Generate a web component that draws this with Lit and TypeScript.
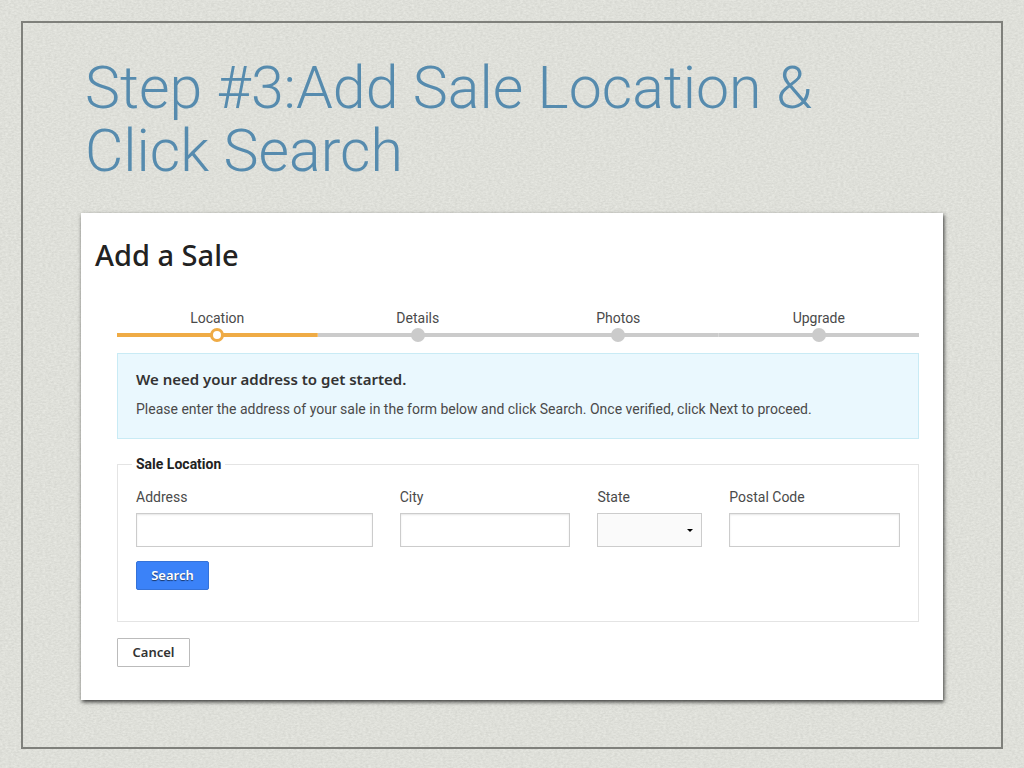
import { LitElement, html, css } from "lit";
import { customElement, property } from "lit/decorators.js";
import { classMap } from "lit/directives/class-map.js";

@customElement("progress-steps")
export class ProgressSteps extends LitElement {
  @property({ attribute: false }) steps: string[] = [];
  @property({ type: Number }) current = 0;

  static styles = css`
    :host {
      display: block;
    }
    .steps {
      display: grid;
      grid-auto-flow: column;
      grid-auto-columns: 1fr;
      margin: 0;
      padding: 0;
      list-style: none;
    }
    .step {
      display: flex;
      flex-direction: column;
      align-items: center;
      font-size: 14px;
      line-height: 20px;
      font-weight: 400;
      color: #4a4a4a;
    }
    .track {
      display: grid;
      place-items: center;
      width: 100%;
      height: 14px;
      background: linear-gradient(#cbcbcb, #cbcbcb) center / 100% 4px no-repeat;
    }
    .dot {
      box-sizing: border-box;
      width: 14px;
      height: 14px;
      border-radius: 50%;
      background: #cbcbcb;
    }
    .active .track {
      background-image: linear-gradient(#efab45, #efab45);
    }
    .active .dot {
      border: 3px solid #efab45;
      background: #fff;
    }
  `;

  render() {
    return html`<ol class="steps">
      ${this.steps.map(
        (name, i) => html`<li class=${classMap({ step: true, active: i === this.current })}>
          <span>${name}</span>
          <span class="track"><span class="dot"></span></span>
        </li>`
      )}
    </ol>`;
  }
}

@customElement("app-root")
export class AppRoot extends LitElement {
  static styles = css`
    :host {
      display: flex;
      box-sizing: border-box;
      min-height: 100vh;
      padding: 21px 21px 19px;
      font-family: Roboto, "Liberation Sans", sans-serif;
      background-color: #dfe0da;
      background-image: url("data:image/svg+xml,%3Csvg xmlns='http://www.w3.org/2000/svg' width='512' height='512'%3E%3Cfilter id='p' x='0' y='0' width='100%25' height='100%25' color-interpolation-filters='sRGB'%3E%3CfeTurbulence type='fractalNoise' baseFrequency='0.35 0.6' numOctaves='3' seed='4' stitchTiles='stitch'/%3E%3CfeColorMatrix values='0.1 0 0 0 0.822 0.1 0 0 0 0.826 0.1 0 0 0 0.802 0 0 0 0 1'/%3E%3C/filter%3E%3Crect width='512' height='512' filter='url(%23p)'/%3E%3C/svg%3E");
    }
    .frame {
      flex: 1;
      min-width: 0;
      padding: 33px 58px 45px;
      border: 2px solid #7f807b;
    }
    .title {
      margin: 0 0 31px;
      padding: 0 4px;
      font-size: 59px;
      line-height: 63px;
      font-weight: 300;
      color: #568bae;
    }
    .card {
      padding: 24px 24px 33px 36px;
      background: #fff;
      box-shadow: 1px 2px 4px rgba(0, 0, 0, 0.75);
    }
    .heading {
      margin: 0 0 35px -22px;
      font-family: "Noto Sans", sans-serif;
      font-size: 29px;
      line-height: 36px;
      font-weight: 500;
      color: #222;
    }
    .notice {
      margin-top: 11px;
      padding: 15px 18px 19px;
      border: 1px solid #c9ebf5;
      background: #eaf8fe;
    }
    .notice-title {
      margin: 0 0 10px;
      font-family: "Noto Sans", sans-serif;
      font-size: 15px;
      line-height: 20px;
      font-weight: 600;
      color: #333;
    }
    .notice-text {
      margin: 0;
      font-size: 14px;
      line-height: 20px;
      font-weight: 400;
      color: #4a4a4a;
    }
    .group {
      min-width: 0;
      margin: 15px 0 16px;
      padding: 13px 18px 31px;
      border: 1px solid #e4e4e4;
    }
    .legend {
      margin-left: -4px;
      padding: 0 4px;
      font-size: 14px;
      line-height: 20px;
      font-weight: 700;
      color: #222;
    }
    .fields {
      display: grid;
      grid-template-columns: repeat(12, minmax(0, 1fr));
      column-gap: 27px;
      margin-bottom: 14px;
    }
    .field {
      display: flex;
      flex-direction: column;
      gap: 6px;
      grid-column: span 3;
    }
    .field.wide {
      grid-column: span 4;
    }
    .field.narrow {
      grid-column: span 2;
    }
    .label {
      font-size: 14px;
      line-height: 20px;
      font-weight: 400;
      color: #4a4a4a;
    }
    .control {
      box-sizing: border-box;
      width: 100%;
      height: 34px;
      margin: 0;
      padding: 0 8px;
      border: 1px solid #ccc;
      border-radius: 0;
      background: #fff;
      font: inherit;
      font-size: 14px;
      box-shadow: inset 0 1px 2px rgba(0, 0, 0, 0.1);
    }
    .select {
      appearance: none;
      background: #fafafa
        url("data:image/svg+xml,%3Csvg xmlns='http://www.w3.org/2000/svg' width='6' height='3'%3E%3Cpath d='M0 0h6L3 3z'/%3E%3C/svg%3E")
        right 8px center no-repeat;
      box-shadow: none;
    }
    .button {
      display: block;
      box-sizing: border-box;
      min-width: 73px;
      height: 29px;
      margin: 0;
      padding: 0 14px 2px;
      border: 1px solid #bbb;
      border-radius: 1px;
      background: #fff;
      font-family: "Noto Sans", sans-serif;
      font-size: 13px;
      line-height: 20px;
      font-weight: 600;
      color: #333;
    }
    .primary {
      border-color: #3572d8;
      border-radius: 2px;
      background: #3b82f8;
      color: #fff;
      text-shadow: 0 1px 1px rgba(0, 0, 0, 0.6);
    }
  `;

  render() {
    return html`
      <main class="frame">
        <h1 class="title">Step #3:Add Sale Location &amp; Click Search</h1>
        <section class="card">
          <h2 class="heading">Add a Sale</h2>
          <progress-steps .steps=${["Location", "Details", "Photos", "Upgrade"]} .current=${0}></progress-steps>
          <div class="notice">
            <h3 class="notice-title">We need your address to get started.</h3>
            <p class="notice-text">
              Please enter the address of your sale in the form below and click Search. Once verified, click Next to
              proceed.
            </p>
          </div>
          <form @submit=${(e: Event) => e.preventDefault()}>
            <fieldset class="group">
              <legend class="legend">Sale Location</legend>
              <div class="fields">
                <div class="field wide">
                  <label class="label" for="address">Address</label>
                  <input class="control" id="address" type="text" />
                </div>
                <div class="field">
                  <label class="label" for="city">City</label>
                  <input class="control" id="city" type="text" />
                </div>
                <div class="field narrow">
                  <label class="label" for="state">State</label>
                  <select class="control select" id="state">
                    <option value=""></option>
                  </select>
                </div>
                <div class="field">
                  <label class="label" for="postal">Postal Code</label>
                  <input class="control" id="postal" type="text" />
                </div>
              </div>
              <button class="button primary" type="submit">Search</button>
            </fieldset>
            <button class="button" type="button">Cancel</button>
          </form>
        </section>
      </main>
    `;
  }
}
